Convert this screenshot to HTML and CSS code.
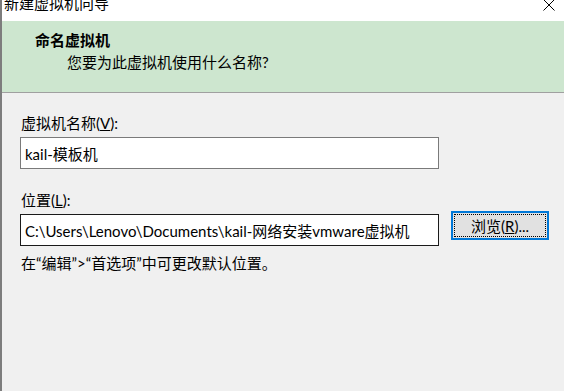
FILE: index.html
```html
<!DOCTYPE html>
<html lang="zh-CN">
<head>
    <meta charset="UTF-8">
    <meta name="viewport" content="width=device-width, initial-scale=1.0">
    <title>新建虚拟机向导</title>
    <link rel="stylesheet" href="styles.css">
</head>
<body>

    <div class="window">
        <div class="titlebar">
            <span class="title">新建虚拟机向导</span>
            <span class="close">
                <svg width="12" height="12" viewBox="0 0 12 12">
                    <path d="M0.5 0.5 L11.5 11.5 M11.5 0.5 L0.5 11.5" stroke="#000" stroke-width="1" fill="none"/>
                </svg>
            </span>
        </div>

        <div class="banner">
            <div class="banner-title">命名虚拟机</div>
            <div class="banner-sub">您要为此虚拟机使用什么名称?</div>
        </div>

        <div class="content">
            <label class="field-label" for="vmName">虚拟机名称(<u>V</u>):</label>
            <input class="text-field" id="vmName" type="text" value="kail-模板机">

            <label class="field-label second" for="vmPath">位置(<u>L</u>):</label>
            <div class="path-row">
                <input class="text-field focused" id="vmPath" type="text" value="C:\Users\Lenovo\Documents\kail-网络安装vmware虚拟机">
                <button type="button" class="browse">浏览(<u>R</u>)...</button>
            </div>

            <p class="hint">在“编辑”&gt;“首选项”中可更改默认位置。</p>
        </div>
    </div>

</body>
</html>
```

FILE: styles.css
```css
body {
    margin: 0;
    padding: 0;
    font-family: Lato, "Noto Sans CJK SC", sans-serif;
    font-size: 15px;
    color: #000;
    background: #f0f0f0;
}

.window {
    height: 391px;
    border-left: 2px solid #7d7d7d;
    background: #f0f0f0;
    overflow: hidden;
}

.titlebar {
    height: 21px;
    background: #fff;
    display: flex;
    justify-content: space-between;
    align-items: flex-start;
    padding: 0 9px 0 2px;
}

.title {
    line-height: 15px;
    margin-top: -4px;
    color: #000;
}

.close {
    margin-top: -1px;
    line-height: 0;
}

.banner {
    height: 72px;
    background: #cde6cf;
    border-bottom: 1px solid #a0a0a0;
    padding-top: 10px;
    box-sizing: border-box;
}

.banner-title {
    font-weight: bold;
    line-height: 18px;
    padding-left: 33px;
}

.banner-sub {
    line-height: 18px;
    margin-top: 4px;
    padding-left: 65px;
}

.content {
    padding: 20px 0 0 18px;
}

.field-label {
    display: block;
    line-height: 20px;
    padding-left: 1px;
}

.field-label.second {
    margin-top: 21px;
}

.text-field {
    display: block;
    box-sizing: border-box;
    width: 419px;
    height: 32px;
    margin: 4px 0 0;
    padding: 0 4px;
    border: 1px solid #7a7a7a;
    background: #fff;
    font-family: inherit;
    font-size: 15px;
    color: #000;
    outline: none;
}

.text-field.focused {
    border-color: #1a1a1a;
}

.path-row {
    display: flex;
    align-items: flex-start;
    gap: 12px;
}

.browse {
    margin-top: 1px;
    width: 98px;
    height: 29px;
    border: 2px solid #0078d7;
    background: #e1e1e1;
    font-family: inherit;
    font-size: 15px;
    color: #000;
    padding: 0;
    outline: 1px dotted #000;
    outline-offset: -4px;
}

.hint {
    margin: 7px 0 0;
    line-height: 20px;
    padding-left: 1px;
}
```
